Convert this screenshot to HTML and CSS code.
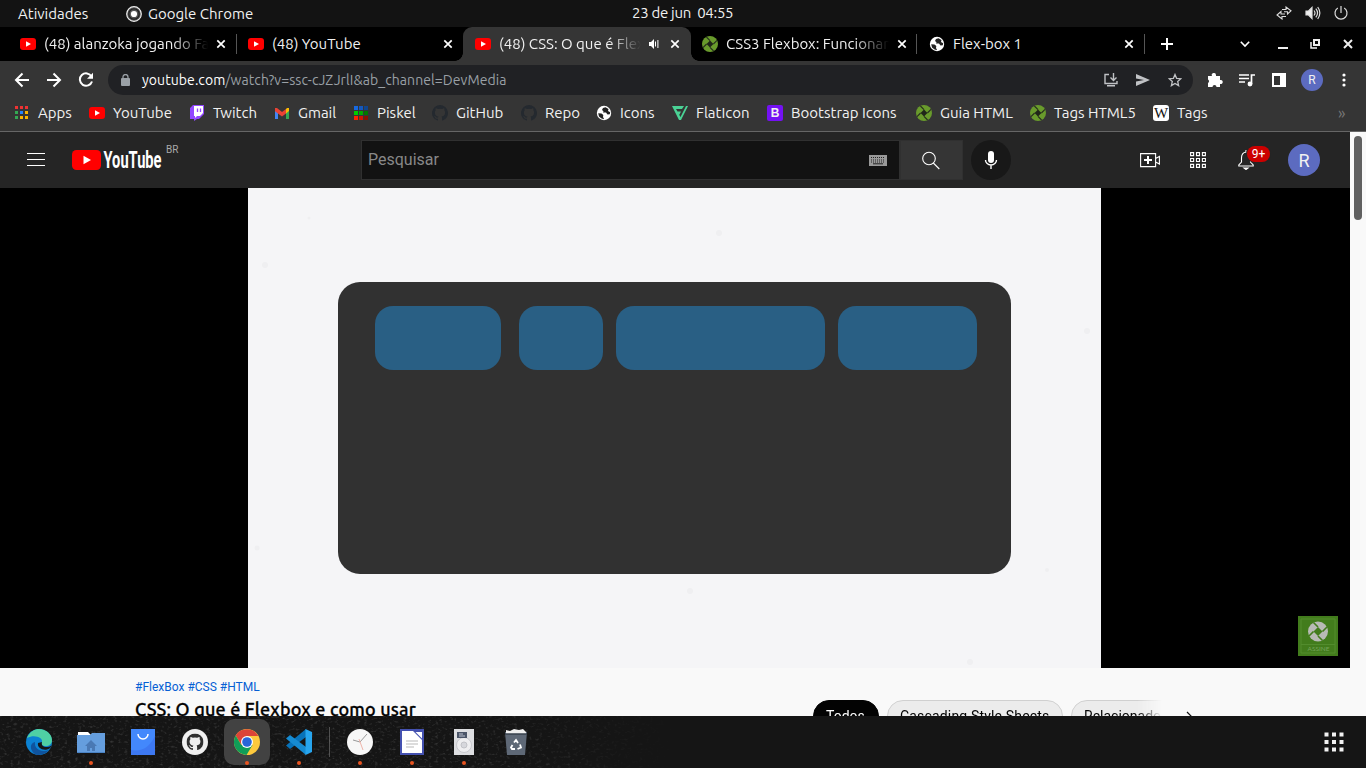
FILE: index.html
```html
<!DOCTYPE html>
<html lang="pt-BR">
<head>
<meta charset="utf-8">
<title>CSS: O que é Flexbox e como usar</title>
<link rel="stylesheet" href="styles.css">
</head>
<body>
<svg class="defs" width="0" height="0">
  <defs>
    <symbol id="yt" viewBox="0 0 16 16"><rect y="2" width="16" height="12" rx="3" fill="#f00"/><path d="M6 5.3v5.4L11 8z" fill="#fff"/></symbol>
    <symbol id="x" viewBox="0 0 10 10"><path d="M1.3 1.3l7.4 7.4M8.7 1.3L1.3 8.7" stroke="#fff" stroke-width="1.7"/></symbol>
    <symbol id="dev" viewBox="0 0 16 16"><circle cx="8" cy="8" r="8" fill="#699b2c"/><path d="M8 4.6L11.4 8 8 11.4 4.6 8z" fill="#202619"/><path d="M8 4.6L4.4 1M11.4 8L15 4.4M8 11.4l3.6 3.6M4.6 8L1 11.6" stroke="#262d1e" stroke-width="1.1"/></symbol>
    <symbol id="globe" viewBox="0 0 16 16"><circle cx="8" cy="8" r="7.200" fill="#fff"/><path d="M2.200 8.300l3.300.2 1.800 1.500-.3 2 1.200 2.200-2.600-.6L3 11.500z" fill="#222"/><path d="M9.500 2.200L7 3 6 5l1.500 1.200L7 7.500h3l1.500 2 2.300-.2.400-2-2.200-1.300.5-2z" fill="#222"/></symbol>
    <symbol id="git" viewBox="0 0 16 16"><path d="M8 0a8 8 0 0 0-2.5 15.6c.4.1.5-.2.5-.4v-1.5c-2.2.5-2.7-1-2.7-1-.4-.9-.9-1.2-.9-1.2-.7-.5.1-.5.1-.5.8.1 1.2.8 1.2.8.7 1.2 1.9.9 2.3.7.1-.5.3-.9.5-1.1-1.8-.2-3.6-.9-3.6-4 0-.9.3-1.6.8-2.1-.1-.2-.4-1 .1-2.1 0 0 .7-.2 2.2.8a7.6 7.6 0 0 1 4 0c1.5-1 2.2-.8 2.2-.8.4 1.1.2 1.9.1 2.1.5.6.8 1.3.8 2.1 0 3.1-1.9 3.7-3.6 3.9.3.3.5.8.5 1.6v2.3c0 .2.1.5.5.4A8 8 0 0 0 8 0z" fill="currentColor"/></symbol>
  </defs>
</svg>

<header class="topbar">
  <span class="activities">Atividades</span>
  <span class="app"><svg width="16" height="16" viewBox="0 0 16 16"><circle cx="8" cy="8" r="7.3" fill="#555" stroke="#eee" stroke-width="1.2"/><circle cx="8" cy="8" r="5.2" fill="none" stroke="#222" stroke-width="1.3"/><circle cx="8" cy="8" r="3.1" fill="#fff"/></svg>Google Chrome</span>
  <span class="clock">23 de jun&nbsp; 04:55</span>
  <span class="tray">
    <svg width="16" height="14" viewBox="0 0 16 14" fill="none" stroke="#ddd" stroke-width="1.1"><path d="M6 3.5h4V1l5 3.8L11.500 8V5.800H8M10 10.500H6V13L1 9l4-3.500V8h4"/></svg>
    <svg width="16" height="14" viewBox="0 0 16 14" fill="none" stroke="#ddd" stroke-width="1.2"><path d="M1 5h2.500L7 1.500v11L3.500 9H1z" fill="#eee"/><path d="M9 4.500q2 2.500 0 5M10.800 2.600q3.500 4.400 0 8.800M12.700 1q4.300 6 0 12"/></svg>
    <svg width="14" height="14" viewBox="0 0 14 14" fill="none" stroke="#ddd" stroke-width="1.2"><path d="M3.800 2a6 6 0 1 0 6.400 0M7 0v7"/></svg>
  </span>
</header>

<nav class="tabs">
  <div class="tab sep"><svg class="i16"><use href="#yt"/></svg><span class="title fade">(48) alanzoka jogando Fa</span><svg class="i10"><use href="#x"/></svg></div>
  <div class="tab"><svg class="i16"><use href="#yt"/></svg><span class="title">(48) YouTube</span><svg class="i10"><use href="#x"/></svg></div>
  <div class="tab active"><svg class="i16"><use href="#yt"/></svg><span class="title fade tight">(48) CSS: O que é Flex</span><svg class="sound" width="10" height="10" viewBox="0 0 10 10"><path d="M0 3h2l3-3v10L2 7H0z" fill="#fff"/><path d="M6.500 2.500v5M8.900 1v8" stroke="#fff"/></svg><svg class="i10"><use href="#x"/></svg></div>
  <div class="tab sep"><svg class="i16"><use href="#dev"/></svg><span class="title fade">CSS3 Flexbox: Funcionan</span><svg class="i10"><use href="#x"/></svg></div>
  <div class="tab sep"><svg class="i16"><use href="#globe"/></svg><span class="title">Flex-box 1</span><svg class="i10"><use href="#x"/></svg></div>
  <div class="winctl">
    <svg width="12" height="12" viewBox="0 0 12 12"><path d="M6 0v12M0 6h12" stroke="#fff" stroke-width="2"/></svg>
    <svg width="10" height="10" viewBox="0 0 10 10"><path d="M.8 2.800L5 7l4.200-4.200" fill="none" stroke="#fff" stroke-width="1.600"/></svg>
    <svg width="10" height="10" viewBox="0 0 10 10"><path d="M0 9h10" stroke="#eee" stroke-width="2"/></svg>
    <svg width="10" height="10" viewBox="0 0 10 10" fill="none" stroke="#eee"><path d="M4 1h5v5H4z" stroke-width="2"/><path d="M1 3v6h6" stroke-width="1.500"/></svg>
    <svg width="10" height="10" viewBox="0 0 10 10"><path d="M1 1l8 8M9 1L1 9" stroke="#eee" stroke-width="2"/></svg>
  </div>
</nav>

<div class="toolbar">
  <svg width="16" height="16" viewBox="0 0 16 16" fill="none" stroke="#fff" stroke-width="2"><path d="M15 8H2.500M8.500 1.500L2 8l6.500 6.500"/></svg>
  <svg width="16" height="16" viewBox="0 0 16 16" fill="none" stroke="#fff" stroke-width="2"><path d="M1 8h12.500M7.500 1.500L14 8l-6.500 6.500"/></svg>
  <svg width="16" height="16" viewBox="0 0 16 16"><path d="M13.500 4.500A6.200 6.200 0 1 0 14 9.500" fill="none" stroke="#fff" stroke-width="2"/><path d="M15 .8v6H9z" fill="#fff"/></svg>
  <div class="url">
    <svg class="lock" width="9" height="12" viewBox="0 0 9 12"><rect y="4" width="9" height="8" rx="1" fill="#9aa0a6"/><path d="M2 5V3a2.500 2.500 0 0 1 5 0v2" fill="none" stroke="#9aa0a6" stroke-width="1.300"/></svg>
    <span class="addr"><b>youtube.com</b>/watch?v=ssc-cJZJrlI&amp;ab_channel=DevMedia</span>
    <svg width="14" height="14" viewBox="0 0 14 14" fill="none" stroke="#c0c2c5" stroke-width="1.400"><path d="M5 1.500H1v9h12V8M9.500 0v7M6.500 4.500l3 3 3-3M3 12.700h8"/></svg>
    <svg width="14" height="12" viewBox="0 0 14 12" fill="#c0c2c5"><path d="M0 0l14 6L0 12V7.500L8 6 0 4.500z"/></svg>
    <svg width="14" height="14" viewBox="0 0 14 14" fill="none" stroke="#c0c2c5" stroke-width="1.300"><path d="M7 1.500l1.600 3.800 4.200.4-3.100 2.800.9 4.100L7 10.400l-3.600 2.200.9-4.100L1.200 5.700l4.200-.4z"/></svg>
  </div>
  <svg class="ext" width="16" height="16" viewBox="0 0 16 16" fill="#fff"><path d="M1 4h4a2.100 2.100 0 1 1 4-1v1h4v4a2.100 2.100 0 1 1 0 4v3H9.500a2 2 0 0 0-4 0H1v-4a2 2 0 0 0 0-3.500z"/></svg>
  <svg width="17" height="14" viewBox="0 0 17 14" fill="none" stroke="#fff" stroke-width="1.700"><path d="M0 2h10M0 5.500h10M0 9h6M12.500 11V2H16"/><circle cx="11" cy="11" r="1.600" fill="#fff"/></svg>
  <svg width="14" height="14" viewBox="0 0 14 14"><path d="M0 0h14v14H0z" fill="#fff"/><path d="M2 3h6v9H2z" fill="#333"/></svg>
  <span class="profile">R</span>
  <svg width="4" height="14" viewBox="0 0 4 14" fill="#fff"><circle cx="2" cy="2" r="1.600"/><circle cx="2" cy="7" r="1.600"/><circle cx="2" cy="12" r="1.600"/></svg>
</div>

<div class="bookmarks">
  <a><svg class="i16" viewBox="0 0 16 16"><g fill="#e33"><path d="M1 1h3v3H1zM6 1h3v3H6zM11 1h3v3h-3z"/></g><path d="M1 6h3v3H1zM1 11h3v3H1z" fill="#34a853"/><path d="M6 6h3v3H6z" fill="#2684fc"/><path d="M11 6h3v3h-3zM11 11h3v3h-3zM6 11h3v3H6z" fill="#fbb400"/></svg>Apps</a>
  <a><svg class="i16"><use href="#yt"/></svg>YouTube</a>
  <a><svg class="i16" viewBox="0 0 16 16"><path d="M1 3l3-3h11v9l-5 5H8l-3 2v-2H1z" fill="#9146ff"/><path d="M5 1h9v7l-3 3H8l-2 2v-2H5z" fill="#fff"/><path d="M8.500 3.500V7M11.500 3.500V7" stroke="#9146ff" stroke-width="1.300"/></svg>Twitch</a>
  <a><svg class="i16" viewBox="0 0 16 16"><path d="M1 4v10h3V7z" fill="#4285f4"/><path d="M15 4v10h-3V7z" fill="#34a853"/><path d="M12 4l1-1h2v3l-3 2.500z" fill="#fbbc04"/><path d="M1 3h2l5 4 4-3v4.500l-4 3-7-5.300z" fill="#ea4335"/></svg>Gmail</a>
  <a><svg class="i16" viewBox="0 0 16 16"><path d="M1 1h4v4H1z" fill="#1769e0"/><path d="M6 1h4v4H6z" fill="#1458bd"/><path d="M11 1h4v4h-4z" fill="#11458c"/><path d="M1 6h4v4H1z" fill="#0c0"/><path d="M6 6h4v4H6z" fill="#0a0"/><path d="M11 6h4v4h-4z" fill="#070"/><path d="M1 11h4v4H1z" fill="#f20"/><path d="M6 11h4v4H6z" fill="#c10"/><path d="M11 11h4v4h-4z" fill="#810"/></svg>Piskel</a>
  <a class="dim"><svg class="i16"><use href="#git"/></svg><span>GitHub</span></a>
  <a class="dim"><svg class="i16"><use href="#git"/></svg><span>Repo</span></a>
  <a><svg class="i16"><use href="#globe"/></svg>Icons</a>
  <a><svg class="i16" viewBox="0 0 16 16"><path d="M0 1h12l-2 3H4l1.500 2.500H9l-1.500 3H7L8.500 12 14 1h2L9 15H7z" fill="#4ad295"/></svg>FlatIcon</a>
  <a><span class="bs">B</span>Bootstrap Icons</a>
  <a><svg class="i16"><use href="#dev"/></svg>Guia HTML</a>
  <a><svg class="i16"><use href="#dev"/></svg>Tags HTML5</a>
  <a><span class="wiki">W</span>Tags</a>
  <span class="more">»</span>
</div>

<main class="page">
  <div class="content">
    <header class="masthead">
      <svg class="burger" width="18" height="14" viewBox="0 0 18 14"><path d="M0 .5h18M0 6.500h18M0 12.500h18" stroke="#fff"/></svg>
      <svg class="logo" width="92" height="22" viewBox="0 0 92 22"><rect y="1" width="29" height="20" rx="4.500" fill="#f00"/><path d="M11.500 6.700v8.600l7.500-4.300z" fill="#fff"/><text x="31.500" y="19" font-size="23" textLength="58" lengthAdjust="spacingAndGlyphs">YouTube</text></svg>
      <span class="country">BR</span>
      <div class="search"><span>Pesquisar</span>
        <svg width="18" height="11" viewBox="0 0 18 11"><path d="M0 0h18v11H0z" fill="#999"/><path d="M2 2.500h14M2 5h14M2 7h14" stroke="#222" stroke-dasharray="1 1"/><path d="M4 8.800h10" stroke="#222"/></svg>
      </div>
      <div class="go"><svg width="18" height="19" viewBox="0 0 18 19" fill="none" stroke="#fff" stroke-width="1.100"><circle cx="7" cy="7.500" r="6.300"/><path d="M11.300 12l6 6"/></svg></div>
      <div class="mic"><svg width="14" height="18" viewBox="0 0 14 18"><rect x="4" width="6" height="12" rx="3" fill="#fff"/><path d="M1.500 9a5.500 5 0 0 0 11 0M7 14v4" fill="none" stroke="#fff" stroke-width="1.400"/></svg></div>
      <svg class="create" width="20" height="15" viewBox="0 0 20 15" fill="none" stroke="#fff" stroke-width="1.100"><path d="M.6.600h15v13H.6zM15.600 5.500l3.800-2v7.500l-3.800-2"/><path d="M4 7.100h8M8 3v8" stroke-width="2"/></svg>
      <svg class="grid" width="16" height="16" viewBox="0 0 16 16" fill="none" stroke="#fff" stroke-width="1.100"><path d="M.6.600h3v3h-3zM6.500.600h3v3h-3zM12.400.600h3v3h-3zM.6 6.500h3v3h-3zM6.500 6.500h3v3h-3zM12.400 6.500h3v3h-3zM.6 12.400h3v3h-3zM6.500 12.400h3v3h-3zM12.400 12.400h3v3h-3z"/></svg>
      <div class="bell"><svg width="16" height="20" viewBox="0 0 16 20" fill="none" stroke="#fff" stroke-width="1.100"><path d="M8 0v2C4.500 2.500 3.500 5 3.500 8v4L.8 15v1h14.400v-1l-2.700-3V8C12.500 5 11.500 2.500 8 2"/><path d="M6 18h4l-2 1.500z" fill="#fff"/></svg><span class="badge">9+</span></div>
      <span class="avatar">R</span>
    </header>

    <section class="player">
      <div class="stage">
        <svg class="specks" width="853" height="480" fill="#efeff1"><circle cx="17" cy="77" r="3"/><circle cx="471" cy="45" r="3"/><circle cx="839" cy="143" r="3"/><circle cx="9" cy="360" r="2.500"/><circle cx="442" cy="403" r="3"/><circle cx="799" cy="382" r="2"/><circle cx="722" cy="474" r="3"/><circle cx="61" cy="30" r="1.500"/></svg>
        <div class="flexbox"><i class="b1"></i><i class="b2"></i><i class="b3"></i><i class="b4"></i></div>
      </div>
      <div class="watermark"><svg width="40" height="40" viewBox="0 0 40 40"><path d="M0 0h40v40H0z" fill="#427c1c"/><path d="M3 3h34v34H3zM3 28.500h34" fill="none" stroke="#528c2d"/><circle cx="20" cy="15.500" r="10" fill="#b8bab5"/><path d="M20 11l4.500 4.500L20 20l-4.500-4.500z" fill="#427c1c"/><path d="M20 11l-4.500-4.500M24.500 15.500L29 11M20 20l4.500 4.500M15.500 15.500L11 20" stroke="#427c1c" stroke-width="1.600"/><text x="9.500" y="35.300" font-size="6.500" textLength="22" lengthAdjust="spacingAndGlyphs" fill="#75a45a">ASSINE</text></svg></div>
    </section>

    <section class="below">
      <div class="info"><p class="tags">#FlexBox #CSS #HTML</p><h1>CSS: O que é Flexbox e como usar</h1></div>
      <div class="chips"><span class="chip on">Todos</span><span class="chip c2">Cascading Style Sheets</span><span class="chip c3">Relacionados</span></div>
      <svg class="next" width="8" height="12" viewBox="0 0 8 12"><path d="M1 1l5 5-5 5" fill="none" stroke="#111" stroke-width="1.200"/></svg>
    </section>
  </div>
  <div class="scroll"><div class="thumb"></div></div>
</main>

<footer class="dock">
  <svg class="noise" width="680" height="52"><filter id="grain"><feTurbulence type="fractalNoise" baseFrequency=".28 .4" numOctaves="2" seed="4"/><feColorMatrix values="0 0 0 0 .5  0 0 0 0 .5  0 0 0 0 .5  2.500 0 0 0 -1.350"/></filter><rect width="680" height="52" filter="url(#grain)"/></svg>
  <div class="launch"><svg width="26" height="26" viewBox="0 0 26 26"><circle cx="13" cy="13" r="13" fill="#0c82d3"/><path d="M1 9C4 2 9 0 13 0c7 0 13 5 13 11 0 4-3 6-6 6-4 0-5-2-4-4 1-4-7-8-15-4z" fill="#4fd0a4"/><path d="M9 13c-1 7 6 11 14 8-3 4-8 5-12 5-6-2-9-11-2-13z" fill="#0f539d"/><path d="M16 13c-1 3 1 5 5 5 2 0 4-1 4.500-2C25 19 23 20 21 20.500c-5 1-10-2-9-6.500z" fill="#171717"/></svg></div>
  <div class="launch run"><svg width="28" height="24" viewBox="0 0 28 24"><path d="M1 4V2h10l3 3h13v6H1z" fill="#fff"/><path d="M0 5h13l2-2h13v20H0z" fill="#659ede"/><path d="M14 10l6 6h-2v5h-3v-3h-2v3h-3v-5H8z" fill="#4a79b4"/><path d="M0 22.500h28" stroke="#4b83c4"/></svg></div>
  <div class="launch"><svg width="24" height="26" viewBox="0 0 24 26"><path d="M0 0h24v26H0z" fill="#4388fc"/><path d="M0 21Q16 24 24 7v19H0z" fill="#3d78f2"/><path d="M7 5a5 5 0 0 0 10 0" fill="none" stroke="#fff" stroke-width="1.500"/></svg></div>
  <div class="launch"><svg class="ghd" width="26" height="26" viewBox="0 0 26 26"><circle cx="13" cy="13" r="13" fill="#f0f0f0"/><use href="#git" x="4.500" y="4.500" width="17" height="17"/></svg></div>
  <div class="launch run focus"><svg width="26" height="26" viewBox="0 0 26 26"><circle cx="13" cy="13" r="13" fill="#fdc93d"/><path d="M1.700 6.500A13 13 0 0 1 24.300 7H13l-5.500 9z" fill="#dc4438"/><path d="M1.700 6.500A13 13 0 0 0 12.500 26L18.500 16H7.300z" fill="#109d58"/><circle cx="13" cy="13" r="6" fill="#fff"/><circle cx="13" cy="13" r="4.800" fill="#2865d8"/></svg></div>
  <div class="launch run"><svg width="26" height="26" viewBox="0 0 26 26"><path d="M20 0v8L4 20l-4-3.500z" fill="#0872b9"/><path d="M0 9.500L4 6l16 12v8z" fill="#168bd2"/><path d="M19.500 0L26 3v20l-6.500 3z" fill="#27a5ee"/></svg></div>
  <i class="rule"></i>
  <div class="launch run"><svg width="26" height="26" viewBox="0 0 26 26" fill="none"><circle cx="13" cy="13" r="13" fill="#f7f7f7"/><path d="M6 11l7 2 7-8" stroke="#999"/><path d="M12 10l4 11" stroke="#efb5aa"/></svg></div>
  <div class="launch run"><svg width="24" height="26" viewBox="0 0 24 26"><path d="M0 0h24v26H0z" fill="#4451b0"/><path d="M2 2h11l9 9v13H2z" fill="#fff"/><path d="M15.500 3H22v6.500z" fill="#fff"/><path d="M6 12h12M6 15h12M6 18h8" stroke="#b9b9b9"/></svg></div>
  <div class="launch run"><svg width="20" height="26" viewBox="0 0 20 26"><path d="M0 0h20v26H0z" fill="#dddee1"/><circle cx="10" cy="16" r="7.500" fill="#eeeef0" stroke="#c8c9ce"/><circle cx="10" cy="16" r="3" fill="#d6d7dc" stroke="#c1c2c7"/><path d="M3 3h10v6H3z" fill="#4b5568"/><path d="M5 5h4M5 7h6" stroke="#bcc2cf"/></svg></div>
  <div class="launch"><svg width="22" height="26" viewBox="0 0 22 26"><path d="M0 3h22l-2 23H2z" fill="#5e6876"/><path d="M1 1l4 1 4-2 5 1 4-1 3 3v2H1z" fill="#eee"/><path d="M0 5h22" stroke="#37404d" stroke-width="1.500"/><path d="M9 13.500l2-2.500 2 3M15 15.500l1 3-3.500 1.500M10 20H7l-1-1.500L7.500 16" fill="none" stroke="#fff" stroke-width="1.800"/></svg></div>
  <svg class="apps" width="20" height="20" viewBox="0 0 20 20" fill="#f2f2f2"><path d="M.5.500h4v4h-4zM8 .5h4v4H8zM15.500.500h4v4h-4zM.5 8h4v4h-4zM8 8h4v4H8zM15.500 8h4v4h-4zM.5 15.500h4v4h-4zM8 15.500h4v4H8zM15.500 15.500h4v4h-4z"/></svg>
</footer>
</body>
</html>
```
FILE: styles.css
```css
* { box-sizing: border-box; }
body { margin: 0; width: 1366px; height: 768px; overflow: hidden; display: flex; flex-direction: column; background: #000; color: #f1f1f1; font: 15px/20px "Ubuntu", "Noto Sans", sans-serif; }
svg { display: block; flex: none; }
.defs { position: absolute; }
.i16 { width: 16px; height: 16px; }
.i10 { width: 10px; height: 10px; }

.topbar { flex: none; height: 27px; background: #131313; display: grid; grid-template-columns: 108px 506px 1fr auto; align-items: center; padding: 0 18px; }
.app { display: flex; gap: 6px; align-items: center; }
.clock { letter-spacing: -.3px; margin-top: -1px; }
.tray { display: flex; gap: 13px; align-items: center; margin-top: -1px; }

.tabs { flex: none; height: 34px; display: grid; grid-template-columns: 229px 226px 228px 226px 228px 1fr; padding-left: 8px; }
.tab { display: flex; align-items: center; padding: 0 11px 0 12px; position: relative; }
.tab.sep::after { content: ""; position: absolute; right: 0; top: 7px; width: 1px; height: 20px; background: #555; }
.tab:nth-child(2) { padding: 0 10px 0 11px; }
.tab:nth-child(4) { padding: 0 10px 0 11px; }
.title { flex: 1; min-width: 0; margin: 0 8px; white-space: nowrap; overflow: hidden; }
.fade { -webkit-mask-image: linear-gradient(90deg, #000 78%, transparent); mask-image: linear-gradient(90deg, #000 78%, transparent); }
.sound { margin-right: 11px; }
.active { background: #353535; border-radius: 9px 9px 0 0; }
.active::before, .active::after { content: ""; position: absolute; bottom: 0; width: 8px; height: 8px; }
.active::before { left: -8px; background: radial-gradient(circle at 0 0, transparent 7.5px, #353535 8px); }
.active::after { right: -8px; background: radial-gradient(circle at 100% 0, transparent 7.5px, #353535 8px); }
.winctl { display: flex; align-items: center; padding-left: 16px; }
.winctl svg:nth-child(2) { margin-left: 67px; }
.winctl svg:nth-child(3) { margin-left: 28px; }
.winctl svg:nth-child(4) { margin-left: 22px; }
.winctl svg:nth-child(5) { margin-left: 23px; }

.toolbar { flex: none; height: 38px; background: #353535; display: flex; align-items: center; padding: 0 20px 0 14px; gap: 16px; }
.toolbar .url { margin-left: -2px; }
.url { width: 1087px; height: 30px; border-radius: 15px; background: #202124; display: flex; align-items: center; padding: 0 11px 0 13px; gap: 18px; }
.addr { flex: 1; margin-left: -6px; color: #9aa0a6; font-size: 14px; letter-spacing: .08px; white-space: nowrap; }
.addr b { font-weight: 400; color: #fff; }
.ext { margin-left: -2px; }
.profile { width: 22px; height: 22px; margin: 0 3px 0 -1px; border-radius: 50%; background: #5c6bc0; font: 12px/22px Roboto, sans-serif; text-align: center; }

.bookmarks { flex: none; height: 33px; background: #353535; border-bottom: 1px solid #666; display: grid; grid-template-columns: 75px 100px 85px 79px 79px 89px 75px 76px 95px 149px 114px 123px 185px auto; padding: 0 0 4px 14px; align-items: center; }
.bookmarks a { display: flex; gap: 8px; align-items: center; white-space: nowrap; }
.dim svg { color: #24292f; }
.bs { width: 16px; height: 16px; border-radius: 2px; background: #7411f3; font: bold 12px/16px "Liberation Sans", sans-serif; text-align: center; }
.wiki { width: 16px; height: 16px; border-radius: 3px; background: #fff; color: #111; font: 15px/16px "Liberation Serif", serif; text-align: center; }
.more { color: #777; font-size: 16px; }

.page { flex: none; height: 584px; display: flex; background: #f9f9f9; font-family: Roboto, sans-serif; }
.content { width: 1350px; }
.masthead { height: 56px; background: #252525; display: flex; align-items: center; padding-left: 27px; }
.logo { margin-left: 27px; }
.logo text { font-family: Roboto, sans-serif; font-weight: 700; fill: #fff; }
.country { width: 14px; margin: -21px 0 0 2px; font-size: 10px; color: #aaa; }
.search { width: 539px; height: 40px; margin-left: 181px; background: #121212; border: 1px solid #303030; display: flex; align-items: center; justify-content: space-between; padding: 0 12px 0 6px; font-size: 16px; color: #888; }
.go { width: 63px; height: 40px; background: #353535; border: 1px solid #303030; display: grid; place-items: center; padding-right: 2px; }
.mic { width: 40px; height: 40px; margin-left: 8px; border-radius: 50%; background: #181818; display: grid; place-items: center; }
.create { margin-left: 129px; }
.grid { margin-left: 30px; }
.bell { position: relative; margin-left: 32px; }
.badge { position: absolute; left: 9px; top: -4px; width: 23px; height: 16px; border-radius: 8px; background: #c00; box-shadow: 0 0 0 1px #252525; font-size: 12px; line-height: 16px; text-align: center; color: #fff; }
.avatar { width: 32px; height: 32px; margin-left: 34px; border-radius: 50%; background: #5c6bc0; font-size: 18px; line-height: 33px; text-align: center; }

.player { position: relative; height: 480px; background: #000; padding-left: 248px; }
.stage { position: relative; width: 853px; height: 480px; background: #f5f5f7; padding: 94px 90px; }
.specks { position: absolute; left: 0; top: 0; }
.flexbox { position: relative; width: 673px; height: 292px; border-radius: 22px; background: #313131; display: flex; padding: 24px 0 0 37px; }
.flexbox i { height: 64px; border-radius: 18px; background: #295f84; }
.b1 { width: 126px; }
.b2 { width: 84px; margin-left: 17.5px; }
.b3 { width: 209px; margin-left: 13px; }
.b4 { width: 139px; margin-left: 13.5px; }
.watermark { position: absolute; right: 12px; bottom: 12px; font-family: Lato, sans-serif; }

.below { height: 48px; overflow: hidden; display: flex; padding-left: 135px; color: #030303; }
.info { width: 678px; padding-top: 11px; }
.tags { margin: 0; color: #065fd4; font-size: 12px; line-height: 16px; }
h1 { margin: 1px 0 0; font: 500 18px/26px "Ubuntu", "Noto Sans", sans-serif; letter-spacing: .18px; -webkit-text-stroke: .3px #030303; white-space: nowrap; }
.chips { width: 349px; height: 48px; padding-top: 32px; display: flex; gap: 8px; overflow: hidden; -webkit-mask-image: linear-gradient(90deg, #000 93%, transparent); mask-image: linear-gradient(90deg, #000 93%, transparent); }
.chip { flex: none; height: 32px; border: 1px solid #d0d0d0; border-radius: 16px; background: #ececec; font-size: 14px; line-height: 30px; padding-left: 12px; }
.on { width: 66px; background: #030303; border-color: #030303; color: #fff; }
.c2 { width: 176px; letter-spacing: .17px; }
.c3 { width: 106px; }
.next { margin: 43px 0 0 24px; }
.scroll { width: 16px; padding: 4px; background: #f9f9f9; }
.thumb { width: 8px; height: 84px; border-radius: 4px; background: #606060; }

.dock { position: relative; flex: none; height: 52px; background: #151515; display: flex; align-items: center; padding: 0 22px 0 13px; }
.noise { position: absolute; left: 0; top: 0; opacity: .22; -webkit-mask-image: linear-gradient(90deg, #000 70%, transparent); mask-image: linear-gradient(90deg, #000 70%, transparent); }
.launch { position: relative; width: 52px; height: 52px; display: grid; place-items: center; }
.run::after { content: ""; position: absolute; left: 24px; top: 45px; width: 4px; height: 4px; border-radius: 50%; background: #e95420; }
.focus::before { content: ""; position: absolute; left: 3px; top: 3px; width: 46px; height: 46px; border-radius: 10px; background: #424242; }
.focus svg { position: relative; }
.ghd { color: #303030; }
.rule { width: 1px; height: 30px; margin: 0 4px; background: #505050; }
.apps { margin-left: auto; }
```
